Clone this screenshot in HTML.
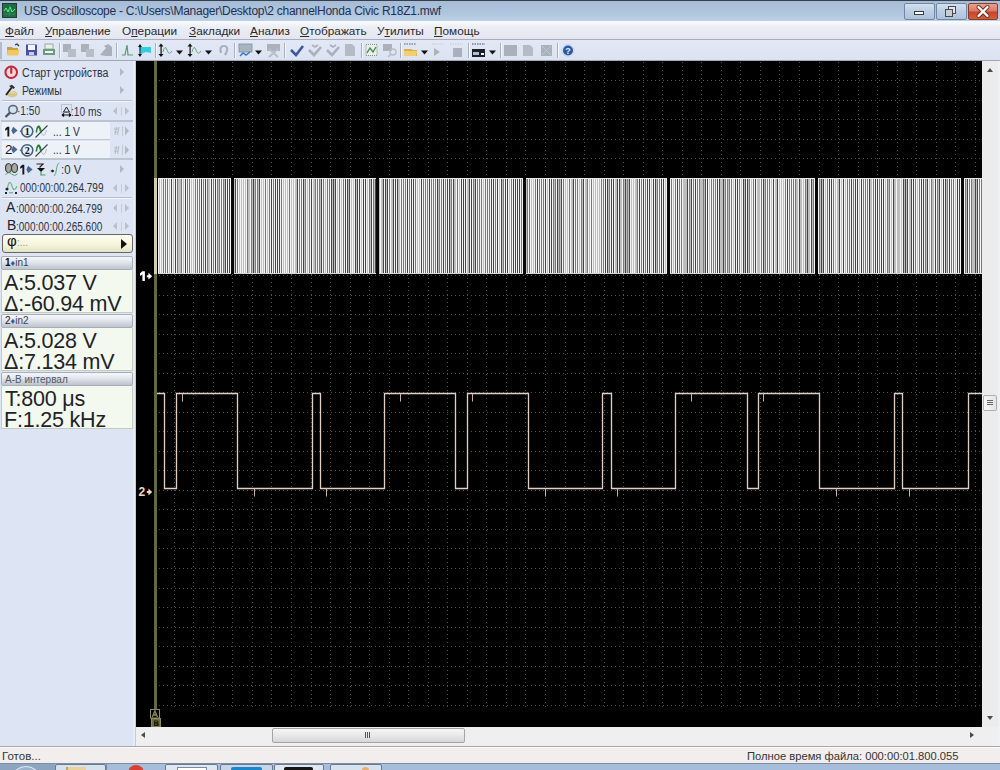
<!DOCTYPE html>
<html><head><meta charset="utf-8">
<style>
*{margin:0;padding:0;box-sizing:border-box}
html,body{width:1000px;height:770px;overflow:hidden;background:#dde5f4;font-family:"Liberation Sans",sans-serif}
.a{position:absolute}
#title{left:0;top:0;width:1000px;height:21px;background:linear-gradient(#a6bbd5,#b0c5de 60%,#bcd2e8);border-top:1px solid #34404c}
#title .t{left:24px;top:3px;font-size:12px;letter-spacing:-0.26px;color:#1e3250;white-space:nowrap}
#menu{left:0;top:21px;width:1000px;height:19px;background:linear-gradient(#fafbfe,#eceef6 35%,#e3e5f0);border-bottom:1px solid #a8adb9}
#menu span{position:absolute;top:3px;font-size:11.8px;color:#2a2a2a;white-space:nowrap}
#menu u{text-decoration:underline}
#tool{left:0;top:40px;width:1000px;height:21px;background:linear-gradient(#e2e8f5,#dbe2f1);border-bottom:1px solid #a0a8b4}
#panel{left:0;top:61px;width:136px;height:685px;background:#dde5f4;border-right:1px solid #c4ccd6;box-shadow:inset -2px 0 0 #e6ecf4}
#vs{left:982px;top:61px;width:16px;height:666px;background:#ececec}
#hs{left:136px;top:727px;width:862px;height:19px;background:#efefef}
#rb{left:998px;top:61px;width:2px;height:685px;background:#f0f1f3}
#status{left:0;top:746px;width:1000px;height:17px;background:#f1eeed;border-top:1px solid #a8a8a8;box-shadow:inset 0 1px 0 #fafafa}
#status span{position:absolute;top:3px;font-size:11.5px;color:#333;white-space:nowrap}
#task{left:0;top:763px;width:1000px;height:7px;background:#a6bedb;border-top:1px solid #7e8ea2;overflow:hidden}
.tbtn{top:0;height:12px;border:1px solid #6a7a90;border-radius:2px;overflow:hidden}
.tx{font-size:12px;line-height:13px;padding-top:1px;color:#2e3440;white-space:nowrap;transform-origin:0 0}
.tb{font-size:13.5px;line-height:14px;font-weight:normal;color:#15181f}
.tA{font-size:14px;line-height:14px;color:#1e222a}
.arr{width:0;height:0;border-left:4px solid #b0b8c4;border-top:4.5px solid transparent;border-bottom:4.5px solid transparent}
.barr{width:0;height:0;border-left:5px solid #5878a0;border-top:4.5px solid transparent;border-bottom:4.5px solid transparent}
.lr{width:17px;height:9px;background:
 linear-gradient(#c4ccd6,#c4ccd6) 8px 0/1px 9px no-repeat}
.lr:before{content:"";position:absolute;left:0;top:0;border-right:4px solid #b8c0ca;border-top:4.5px solid transparent;border-bottom:4.5px solid transparent}
.lr:after{content:"";position:absolute;left:12px;top:0;border-left:4px solid #b8c0ca;border-top:4.5px solid transparent;border-bottom:4.5px solid transparent}
.sep{left:2px;width:130px;height:2px;border-top:1px solid #b6bec9;border-bottom:1px solid #f2f6fb}
.sep2{left:1px;width:132px;height:2px;background:#bcc4ce}
.chbox{left:2px;width:108px;height:18px;background:#edf2f9;border-bottom:1px solid #c0c8d2}
.phi{left:2px;top:173px;width:131px;height:19px;border:1.5px solid #666;border-radius:3px;background:linear-gradient(#fdfdf0,#f4f4dc 60%,#e2e2c4)}
.ph{position:absolute;left:4px;top:-3px;font-size:15px;color:#111}
.pd{position:absolute;left:14px;top:2px;font-size:10px;color:#9a9a88}
.pa{left:118px;top:4px;width:0;height:0;border-left:6px solid #111;border-top:5px solid transparent;border-bottom:5px solid transparent}
.mh{left:1px;width:132px;height:14px;border:1px solid #a8aeb8;border-radius:2px;background:linear-gradient(#f6f7fa,#e4e7ee 40%,#bfc3cd);font-size:10px;line-height:12px;padding-left:3px;color:#3a4250;white-space:nowrap}
.mh b{color:#111;font-weight:bold}
.mh i{font-style:normal;color:#3a5a88;font-size:9px}
.mc{left:1px;width:132px;background:#f3f9ee;border:1px solid #c4ccc0;border-top:none;padding-left:2px;padding-top:0}
.mc{padding-top:3px}
.mc div{font-size:21.5px;letter-spacing:-0.2px;line-height:20.8px;color:#1e2228;white-space:nowrap}
</style></head><body>
<div id="title" class="a">
  <svg class="a" style="left:2px;top:2px" width="15" height="15" viewBox="0 0 15 15"><rect x="0.5" y="0.5" width="14" height="14" fill="#1a7040" stroke="#2a3a30"/><path d="M2 8L4 5L6 9L8 4L10 9L13 6" stroke="#6cf090" stroke-width="1" fill="none"/><path d="M2 11H13M7.5 2V13" stroke="#3aa060" stroke-width="0.6"/></svg>
  <div class="a t">USB Oscilloscope - C:\Users\Manager\Desktop\2 channelHonda Civic R18Z1.mwf</div>
  <div class="a" style="left:904px;top:2px;width:31px;height:17px;border:1px solid #7088a4;border-radius:2px;background:linear-gradient(#d4e0ee,#bccee4 50%,#aec2dc)"></div>
  <div class="a" style="left:914px;top:10px;width:10px;height:4px;background:#fff;border:1px solid #3a3a3a"></div>
  <div class="a" style="left:936px;top:2px;width:31px;height:17px;border:1px solid #7088a4;border-radius:2px;background:linear-gradient(#d4e0ee,#bccee4 50%,#aec2dc)"></div>
  <div class="a" style="left:948px;top:5px;width:8px;height:8px;border:1.5px solid #4a4a4a;background:#e4e8ee"></div>
  <div class="a" style="left:945px;top:8px;width:8px;height:8px;border:1.5px solid #4a4a4a;background:#c8ccd4"></div>
  <div class="a" style="left:968px;top:2px;width:30px;height:17px;border:1px solid #8a3a2a;border-radius:2px;background:linear-gradient(#eaa08e,#dc7a64 45%,#c8442c 55%,#d0603e)"></div>
  <svg class="a" style="left:975px;top:3px" width="16" height="15" viewBox="0 0 16 15"><path d="M3.5 3L12.5 12M12.5 3L3.5 12" stroke="#6a2a20" stroke-width="4" stroke-linecap="round"/><path d="M3.5 3L12.5 12M12.5 3L3.5 12" stroke="#fff" stroke-width="2.4" stroke-linecap="round"/></svg>
</div>
<div id="menu" class="a">
  <span style="left:5px"><u>Ф</u>айл</span>
  <span style="left:45px"><u>У</u>правление</span>
  <span style="left:122px">О<u>п</u>ерации</span>
  <span style="left:189px"><u>З</u>акладки</span>
  <span style="left:250px"><u>А</u>нализ</span>
  <span style="left:300px"><u>О</u>тображать</span>
  <span style="left:377px">У<u>т</u>илиты</span>
  <span style="left:434px"><u>П</u>омощь</span>
</div>
<div id="tool" class="a"></div>
<svg class="a" style="left:0;top:40px" width="600" height="21" viewBox="0 40 600 21">
<rect x="0" y="42" width="2" height="17" fill="#b4bcc8"/>
<path d="M7 47H12L13 48H18V55H7Z" fill="#c8a040"/><path d="M7.5 50H19.5L18 55.5H7Z" fill="#f0c860"/><path d="M15 45L17 44L19 46" stroke="#333" stroke-width="1.2" fill="none"/>
<rect x="26" y="44.5" width="11" height="11" fill="#4a4e9c"/><rect x="28" y="45" width="7" height="5" fill="#f4f4ff"/><rect x="29" y="52" width="5" height="3" fill="#c8cce8"/>
<rect x="45" y="44" width="8" height="5" fill="#e8f0e8" stroke="#8a9a90" stroke-width=".8"/><rect x="43" y="49" width="12" height="6" fill="#6a9a80"/><rect x="45" y="51" width="8" height="2" fill="#f4f4f4"/>
<rect x="59" y="43" width="1" height="15" fill="#a8b0bc"/><rect x="60" y="43" width="1" height="15" fill="#f4f7fb"/>
<rect x="63" y="44" width="8" height="8" fill="#a9b1bb"/><rect x="68" y="49" width="8" height="8" fill="#b8bec6"/>
<rect x="81" y="44" width="8" height="8" fill="#a9b1bb"/><rect x="86" y="49" width="8" height="8" fill="#b8bec6"/>
<path d="M100 55L106 48L104 46L108 44L112 47V56H106Z" fill="#a9b1bb"/>
<rect x="116" y="43" width="1" height="15" fill="#a8b0bc"/><rect x="117" y="43" width="1" height="15" fill="#f4f7fb"/>
<path d="M122 55H125L127 45L128 55H133" stroke="#5a9a70" stroke-width="1.2" fill="none"/>
<path d="M139 47H151V53L146 52L141 54Z" fill="#30d0e0"/><path d="M140 44L142 47H138Z M140 57L142 54H138Z" fill="#111"/><rect x="139.5" y="46" width="1" height="9" fill="#111"/>
<rect x="155" y="43" width="1" height="15" fill="#a8b0bc"/><rect x="156" y="43" width="1" height="15" fill="#f4f7fb"/>
<path d="M161 43.5L163.5 46.5H158.5Z M161 57L163.5 54H158.5Z" fill="#111"/><rect x="160.5" y="46" width="1.2" height="8.5" fill="#111"/><path d="M163 52Q165 44 167 50T172 51" stroke="#70a880" stroke-width="1" fill="none"/>
<path d="M176 50.5H183L179.5 54.5Z" fill="#111"/>
<path d="M190 43.5L192.5 46.5H187.5Z M190 57L192.5 54H187.5Z" fill="#111"/><rect x="189.5" y="46" width="1.2" height="8.5" fill="#111"/><path d="M192 52Q194 44 196 50T201 51" stroke="#70a880" stroke-width="1" fill="none"/>
<path d="M205 50.5H212L208.5 54.5Z" fill="#111"/>
<path d="M221 53Q219 46 224 46Q228 46 227 51L225 55" stroke="#a9b1bb" stroke-width="2.2" fill="none"/>
<rect x="234" y="43" width="1" height="15" fill="#a8b0bc"/><rect x="235" y="43" width="1" height="15" fill="#f4f7fb"/>
<rect x="239" y="44" width="13" height="8" fill="#a8b4c0" stroke="#8090a0" stroke-width=".8"/><path d="M240 56L243 53L246 55L250 52" stroke="#3a78c8" stroke-width="1.5" fill="none"/>
<path d="M255 50.5H262L258.5 54.5Z" fill="#111"/>
<rect x="267" y="44" width="13" height="7" fill="#a9b1bb"/><path d="M269 57L278 49M269 49L278 57" stroke="#b8bec6" stroke-width="2"/>
<rect x="284" y="43" width="1" height="15" fill="#a8b0bc"/><rect x="285" y="43" width="1" height="15" fill="#f4f7fb"/>
<path d="M291 50L296 55L303 46" stroke="#3a5a9a" stroke-width="2.6" fill="none"/>
<path d="M309 50L314 55L321 47" stroke="#a9b1bb" stroke-width="2.6" fill="none"/><path d="M312 45L315 47L318 45" stroke="#a9b1bb" stroke-width="1.6" fill="none"/>
<path d="M327 50L332 55L339 47" stroke="#a9b1bb" stroke-width="2.6" fill="none"/><path d="M330 45L333 47L336 45" stroke="#a9b1bb" stroke-width="1.6" fill="none"/>
<path d="M345 44H352L355 47V56H345Z" fill="#b4bbc4"/>
<rect x="361" y="43" width="1" height="15" fill="#a8b0bc"/><rect x="362" y="43" width="1" height="15" fill="#f4f7fb"/>
<rect x="366" y="44.5" width="11" height="11" fill="#e8f0e8" stroke="#6a7a70" stroke-width=".8" stroke-dasharray="1 1"/><path d="M367 53L370 48L373 52L376 47" stroke="#4a8a5a" stroke-width="1.4" fill="none"/>
<rect x="383" y="44" width="9" height="7" fill="#a9b1bb"/><circle cx="393" cy="52" r="3" fill="none" stroke="#b8bec6" stroke-width="1.4"/><path d="M391 54L388 57" stroke="#b8bec6" stroke-width="1.6"/>
<rect x="400" y="43" width="1" height="15" fill="#a8b0bc"/><rect x="401" y="43" width="1" height="15" fill="#f4f7fb"/>
<path d="M404 44H416" stroke="#4a5a7a" stroke-width="1.2" stroke-dasharray="1.5 1"/><path d="M404 49H411L413 50H417V56H404Z" fill="#d8b050"/><path d="M404 51H417L416 56H404Z" fill="#f0d070"/>
<path d="M421 50.5H428L424.5 54.5Z" fill="#111"/>
<path d="M432 44H444" stroke="#c4cad2" stroke-width="1" stroke-dasharray="1.5 1"/><path d="M434 48L440 52L434 56Z" fill="#a9b1bb"/>
<path d="M450 44H463" stroke="#c4cad2" stroke-width="1" stroke-dasharray="1.5 1"/><rect x="453" y="48" width="9" height="9" fill="#a9b1bb"/>
<rect x="468" y="43" width="1" height="15" fill="#a8b0bc"/><rect x="469" y="43" width="1" height="15" fill="#f4f7fb"/>
<path d="M472 44H485" stroke="#3a4a6a" stroke-width="1.2" stroke-dasharray="1.5 1"/><rect x="472" y="49" width="13" height="8" fill="#1a2028"/><rect x="473" y="52" width="6" height="3" fill="#b0c0d0"/><rect x="481" y="53" width="3" height="2" fill="#fff"/>
<path d="M489 50.5H496L492.5 54.5Z" fill="#111"/>
<rect x="500" y="43" width="1" height="15" fill="#a8b0bc"/><rect x="501" y="43" width="1" height="15" fill="#f4f7fb"/>
<rect x="504" y="45" width="13" height="11" fill="#a9b1bb"/>
<path d="M523 45H530L533 48V56H523Z" fill="#b4bbc4"/>
<rect x="541" y="45" width="11" height="11" fill="#a9b1bb"/><path d="M542 46L551 55M551 46L542 55" stroke="#c0c6ce" stroke-width="1"/>
<rect x="557" y="43" width="1" height="15" fill="#a8b0bc"/><rect x="558" y="43" width="1" height="15" fill="#f4f7fb"/>
<circle cx="568" cy="50.5" r="6" fill="#dfe8f4" stroke="#c8d4e4" stroke-width="1"/><circle cx="568" cy="50.5" r="5" fill="#2a58a8"/><text x="568" y="54" font-size="9" font-weight="bold" fill="#e8f0ff" text-anchor="middle" font-family="Liberation Sans">?</text>
</svg><div id="panel" class="a">
<!-- row: start -->
<svg class="a" style="left:4px;top:4px" width="15" height="15" viewBox="0 0 15 15"><circle cx="7.2" cy="7.3" r="5.8" fill="#f3d6da" stroke="#c02838" stroke-width="2"/><rect x="6.2" y="2.2" width="2.1" height="6.5" fill="#c02838"/></svg>
<div class="a tx" style="left:22px;top:5px;transform:scaleX(0.884)">Старт устройства</div>
<div class="a arr" style="left:120px;top:7px"></div>
<svg class="a" style="left:4px;top:23px" width="15" height="14" viewBox="0 0 15 14"><ellipse cx="8" cy="10" rx="5.5" ry="3.2" fill="#d8c48c"/><path d="M4 9.5Q8 4 12 9.5" fill="#e6d6a4"/><path d="M2 11L8 3" stroke="#222" stroke-width="1.8"/><path d="M5 2L8 0.8L11 3.5L9.5 5Z" fill="#333"/></svg>
<div class="a tx" style="left:22px;top:23px;transform:scaleX(0.87)">Режимы</div>
<div class="a arr" style="left:120px;top:25px"></div>
<div class="a sep" style="top:39px"></div>
<!-- zoom row -->
<svg class="a" style="left:4px;top:43px" width="15" height="15" viewBox="0 0 15 15"><circle cx="9" cy="5.6" r="4.2" fill="#cfe0ee" stroke="#5a6470" stroke-width="1.5"/><path d="M6 8.6L1.5 13" stroke="#4a5260" stroke-width="2.2"/></svg>
<div class="a tx" style="left:17px;top:43px;transform:scaleX(0.843)">·1:50</div>
<svg class="a" style="left:61px;top:43px" width="11" height="13" viewBox="0 0 11 13"><rect x="0.5" y="0.5" width="10" height="8" fill="none" stroke="#9aa2ae" stroke-dasharray="1 1"/><path d="M2.5 8L5.5 3L8.5 8Z" fill="none" stroke="#222" stroke-width="1"/><path d="M1 11H10M1 11L3 9.5M1 11L3 12.5M10 11L8 9.5M10 11L8 12.5" stroke="#111" stroke-width="1.2"/></svg>
<div class="a tx" style="left:71px;top:44px;transform:scaleX(0.85)">:10 ms</div>
<div class="a lr" style="left:113px;top:46px"></div>
<div class="a sep2" style="top:59px"></div>
<!-- channel rows -->
<div class="a chbox" style="top:61px"></div>
<div class="a chbox" style="top:80px"></div>
<div class="a chr" style="top:61px;height:36px"></div>
<svg class="a" style="left:4px;top:65px" width="7" height="11" viewBox="0 0 7 11"><path d="M3.3 0.8H5.3V10.6H3.4V3.6L1.2 4.8V2.8Z" fill="#15181f"/></svg>
<svg class="a" style="left:11px;top:126px;top:65px" width="7" height="9" viewBox="0 0 7 9"><path d="M0.3 4.5L2.2 0.8L6.6 4.5L2.2 8.2Z" fill="#4a6890"/></svg>
<svg class="a" style="left:19px;top:63px" width="15" height="15" viewBox="0 0 15 15"><circle cx="8.2" cy="7.3" r="5.6" fill="#e6eef8" stroke="#44607c" stroke-width="1.5"/><path d="M0.5 7.3L3.2 5.2V9.4Z" fill="#4a6a98"/><text x="8.2" y="11" font-size="10" font-weight="bold" text-anchor="middle" fill="#111" font-family="Liberation Serif">1</text></svg>
<svg class="a" style="left:35px;top:63px" width="13" height="14" viewBox="0 0 13 14"><path d="M0.5 8.5Q1.5 1 3.5 1.5Q5.5 1 6.8 7L5 8Q4 4 3.5 4Q2.5 4 2.2 8.5Z" fill="#2a8038"/><path d="M6 8Q9 16 11.5 6" stroke="#b0b8c0" stroke-width="1" fill="none"/><path d="M0.5 13.5L12.5 1.5" stroke="#3a4048" stroke-width="1.1"/></svg>
<div class="a tx" style="left:53px;top:64px;transform:scaleX(0.862)">... 1 V</div>
<svg class="a" style="left:113px;top:65px" width="17" height="10" viewBox="0 0 17 10"><path d="M1 3H5M1 6H5M3.5 1L2 9M6 1L4.5 9" stroke="#b4bcc6" stroke-width="1"/><rect x="9" y="0" width="1" height="10" fill="#c0c8d0"/><path d="M12 0.5L16 5L12 9.5Z" fill="#b0b8c2"/></svg>
<div class="a tb" style="left:5px;top:82px">2</div>
<svg class="a" style="left:11px;top:84px" width="7" height="9" viewBox="0 0 7 9"><path d="M0.3 4.5L2.2 0.8L6.6 4.5L2.2 8.2Z" fill="#4a6890"/></svg>
<svg class="a" style="left:19px;top:82px" width="15" height="15" viewBox="0 0 15 15"><circle cx="8.2" cy="7.3" r="5.6" fill="#e6eef8" stroke="#44607c" stroke-width="1.5"/><path d="M0.5 7.3L3.2 5.2V9.4Z" fill="#4a6a98"/><text x="8.2" y="11" font-size="10" font-weight="bold" text-anchor="middle" fill="#111" font-family="Liberation Serif">2</text></svg>
<svg class="a" style="left:35px;top:82px" width="13" height="14" viewBox="0 0 13 14"><path d="M0.5 8.5Q1.5 1 3.5 1.5Q5.5 1 6.8 7L5 8Q4 4 3.5 4Q2.5 4 2.2 8.5Z" fill="#2a8038"/><path d="M6 8Q9 16 11.5 6" stroke="#b0b8c0" stroke-width="1" fill="none"/><path d="M0.5 13.5L12.5 1.5" stroke="#3a4048" stroke-width="1.1"/></svg>
<div class="a tx" style="left:53px;top:81.5px;transform:scaleX(0.862)">... 1 V</div>
<svg class="a" style="left:113px;top:84px" width="17" height="10" viewBox="0 0 17 10"><path d="M1 3H5M1 6H5M3.5 1L2 9M6 1L4.5 9" stroke="#b4bcc6" stroke-width="1"/><rect x="9" y="0" width="1" height="10" fill="#c0c8d0"/><path d="M12 0.5L16 5L12 9.5Z" fill="#b0b8c2"/></svg>
<div class="a sep2" style="top:97px"></div>
<!-- trigger row -->
<svg class="a" style="left:5px;top:101px" width="13" height="15" viewBox="0 0 13 15"><ellipse cx="3.5" cy="6" rx="3" ry="4.5" fill="#a8a8a0" stroke="#404040" stroke-width="1.2"/><ellipse cx="9.5" cy="6" rx="3" ry="4.5" fill="#a8a8a0" stroke="#404040" stroke-width="1.2"/><path d="M0.5 13Q3 9 6.5 12Q10 15 12.5 12" stroke="#5aa070" stroke-width="1" fill="none"/></svg>
<svg class="a" style="left:19px;top:103px" width="7" height="11" viewBox="0 0 7 11"><path d="M3.3 0.8H5.3V10.6H3.4V3.6L1.2 4.8V2.8Z" fill="#15181f"/></svg>
<svg class="a" style="left:26px;top:104px" width="7" height="9" viewBox="0 0 7 9"><path d="M0.3 4.5L2.2 0.8L6.6 4.5L2.2 8.2Z" fill="#4a6890"/></svg>
<svg class="a" style="left:36px;top:102px" width="10" height="13" viewBox="0 0 10 13"><path d="M0.5 1H7L3.5 4.5" stroke="#222" stroke-width="1.2" fill="none"/><path d="M1 5H9L5 9Z" fill="#111"/><path d="M5 8V12H9.5" stroke="#4a9a5a" stroke-width="1.2" fill="none"/></svg>
<svg class="a" style="left:50px;top:101px" width="10" height="15" viewBox="0 0 10 15"><path d="M0.5 9L2.5 7.5L4.5 9L2.5 10.5Z" fill="#222"/><path d="M4 14Q6 13 6.5 7Q7 1 9.5 1" stroke="#60a878" stroke-width="1" fill="none"/></svg>
<div class="a tx" style="left:61px;top:102px;transform:scaleX(0.95)">:0 V</div>
<div class="a arr" style="left:120px;top:104px"></div>
<svg class="a" style="left:4px;top:119px" width="14" height="14" viewBox="0 0 14 14"><path d="M3 11Q5 -3 8 6Q10 13 13 6" stroke="#6ab888" stroke-width="1.1" fill="none"/><path d="M1 9L3 7.5L5 9L3 10.5Z" fill="#222"/><rect x="1" y="12" width="2" height="2" fill="#222"/><rect x="5" y="12" width="4" height="1.5" fill="#9aa"/><rect x="11" y="12" width="2" height="2" fill="#222"/></svg>
<div class="a tx" style="left:20px;top:120px;transform:scaleX(0.834)">000:00:00.264.799</div>
<div class="a lr" style="left:113px;top:123px"></div>
<div class="a sep" style="top:136px"></div>
<!-- A/B rows -->
<div class="a tA" style="left:6px;top:139px">A</div>
<div class="a tx" style="left:16px;top:141px;transform:scaleX(0.834)">:000:00:00.264.799</div>
<div class="a lr" style="left:113px;top:143px"></div>
<div class="a tA" style="left:7px;top:157px">B</div>
<div class="a tx" style="left:16px;top:159px;transform:scaleX(0.834)">:000:00:00.265.600</div>
<div class="a lr" style="left:113px;top:161px"></div>
<div class="a phi"><span class="ph">φ</span><span class="pd">:...</span><div class="a pa"></div></div>
<!-- measurements -->
<div class="a mh" style="top:195px"><b>1</b><i>♦</i>in1</div>
<div class="a mc" style="top:209px;height:43px"><div>A:5.037 V</div><div>Δ:-60.94 mV</div></div>
<div class="a mh" style="top:253px"><b style="font-weight:normal;color:#20242c">2</b><i>♦</i>in2</div>
<div class="a mc" style="top:267px;height:43px"><div>A:5.028 V</div><div>Δ:7.134 mV</div></div>
<div class="a mh" style="top:311px;color:#505866;padding-top:1px">А-В интервал</div>
<div class="a mc" style="top:325px;height:43px;padding-left:3px"><div>T:800 μs</div><div style="margin-left:-1px">F:1.25 kHz</div></div>
</div>
<svg class="a" style="left:136px;top:61px" width="846" height="666" viewBox="136 61 846 666" shape-rendering="crispEdges">
<rect x="136" y="61" width="846" height="666" fill="#000"/>
<path d="M174.5 62V707M193.5 62V707M213.5 62V707M232.5 62V707M252.5 62V707M271.5 62V707M291.5 62V707M311.5 62V707M330.5 62V707M350.5 62V707M369.5 62V707M389.5 62V707M408.5 62V707M428.5 62V707M447.5 62V707M467.5 62V707M486.5 62V707M506.5 62V707M525.5 62V707M545.5 62V707M565.5 62V707M584.5 62V707M604.5 62V707M623.5 62V707M643.5 62V707M662.5 62V707M682.5 62V707M701.5 62V707M721.5 62V707M740.5 62V707M760.5 62V707M779.5 62V707M799.5 62V707M819.5 62V707M838.5 62V707M858.5 62V707M877.5 62V707M897.5 62V707M916.5 62V707M936.5 62V707M955.5 62V707M975.5 62V707" stroke="#505050" stroke-width="1" stroke-dasharray="1 3" fill="none"/>
<path d="M155 80.5H982M155 100.5H982M155 119.5H982M155 139.5H982M155 158.5H982M155 178.5H982M155 197.5H982M155 217.5H982M155 236.5H982M155 256.5H982M155 275.5H982M155 295.5H982M155 314.5H982M155 334.5H982M155 353.5H982M155 373.5H982M155 392.5H982M155 412.5H982M155 431.5H982M155 451.5H982M155 470.5H982M155 490.5H982M155 509.5H982M155 529.5H982M155 548.5H982M155 568.5H982M155 588.5H982M155 607.5H982M155 627.5H982M155 646.5H982M155 666.5H982M155 685.5H982M155 705.5H982" stroke="#505050" stroke-width="1" stroke-dasharray="1 3" fill="none"/>
<path d="M158 178h1v96h-1zM160 178h1v96h-1zM162 178h1v96h-1zM164 178h1v96h-1zM166 178h1v96h-1zM168 178h1v96h-1zM170 178h1v96h-1zM172 178h1v96h-1zM174 178h1v96h-1zM176 178h1v96h-1zM182 178h1v96h-1zM184 178h1v96h-1zM186 178h1v96h-1zM188 178h1v96h-1zM190 178h1v96h-1zM192 178h1v96h-1zM194 178h1v96h-1zM196 178h1v96h-1zM198 178h1v96h-1zM200 178h1v96h-1zM202 178h1v96h-1zM204 178h1v96h-1zM206 178h1v96h-1zM210 178h1v96h-1zM212 178h1v96h-1zM214 178h1v96h-1zM216 178h1v96h-1zM220 178h1v96h-1zM222 178h1v96h-1zM226 178h1v96h-1zM228 178h1v96h-1zM230 178h1v96h-1zM236 178h1v96h-1zM238 178h1v96h-1zM240 178h1v96h-1zM242 178h1v96h-1zM244 178h1v96h-1zM246 178h1v96h-1zM250 178h1v96h-1zM256 178h1v96h-1zM260 178h1v96h-1zM262 178h1v96h-1zM264 178h1v96h-1zM266 178h1v96h-1zM268 178h1v96h-1zM270 178h1v96h-1zM272 178h1v96h-1zM274 178h1v96h-1zM276 178h1v96h-1zM278 178h1v96h-1zM280 178h1v96h-1zM282 178h1v96h-1zM284 178h1v96h-1zM286 178h1v96h-1zM288 178h1v96h-1zM290 178h1v96h-1zM292 178h1v96h-1zM294 178h1v96h-1zM298 178h1v96h-1zM300 178h1v96h-1zM302 178h1v96h-1zM306 178h1v96h-1zM308 178h1v96h-1zM310 178h1v96h-1zM312 178h1v96h-1zM316 178h1v96h-1zM318 178h1v96h-1zM322 178h1v96h-1zM324 178h1v96h-1zM326 178h1v96h-1zM328 178h1v96h-1zM330 178h1v96h-1zM336 178h1v96h-1zM338 178h1v96h-1zM340 178h1v96h-1zM342 178h1v96h-1zM344 178h1v96h-1zM346 178h1v96h-1zM350 178h1v96h-1zM352 178h1v96h-1zM354 178h1v96h-1zM358 178h1v96h-1zM360 178h1v96h-1zM362 178h1v96h-1zM364 178h1v96h-1zM366 178h1v96h-1zM368 178h1v96h-1zM372 178h1v96h-1zM380 178h1v96h-1zM384 178h1v96h-1zM388 178h1v96h-1zM390 178h1v96h-1zM394 178h1v96h-1zM396 178h1v96h-1zM400 178h1v96h-1zM402 178h1v96h-1zM404 178h1v96h-1zM406 178h1v96h-1zM408 178h1v96h-1zM410 178h1v96h-1zM412 178h1v96h-1zM414 178h1v96h-1zM416 178h1v96h-1zM418 178h1v96h-1zM420 178h1v96h-1zM422 178h1v96h-1zM424 178h1v96h-1zM426 178h1v96h-1zM428 178h1v96h-1zM430 178h1v96h-1zM432 178h1v96h-1zM434 178h1v96h-1zM436 178h1v96h-1zM440 178h1v96h-1zM442 178h1v96h-1zM444 178h1v96h-1zM446 178h1v96h-1zM448 178h1v96h-1zM452 178h1v96h-1zM456 178h1v96h-1zM458 178h1v96h-1zM460 178h1v96h-1zM462 178h1v96h-1zM464 178h1v96h-1zM466 178h1v96h-1zM470 178h1v96h-1zM472 178h1v96h-1zM476 178h1v96h-1zM478 178h1v96h-1zM480 178h1v96h-1zM482 178h1v96h-1zM484 178h1v96h-1zM486 178h1v96h-1zM488 178h1v96h-1zM490 178h1v96h-1zM492 178h1v96h-1zM494 178h1v96h-1zM496 178h1v96h-1zM498 178h1v96h-1zM500 178h1v96h-1zM504 178h1v96h-1zM506 178h1v96h-1zM508 178h1v96h-1zM510 178h1v96h-1zM512 178h1v96h-1zM514 178h1v96h-1zM516 178h1v96h-1zM518 178h1v96h-1zM520 178h1v96h-1zM522 178h1v96h-1zM528 178h1v96h-1zM530 178h1v96h-1zM532 178h1v96h-1zM534 178h1v96h-1zM536 178h1v96h-1zM538 178h1v96h-1zM540 178h1v96h-1zM542 178h1v96h-1zM544 178h1v96h-1zM546 178h1v96h-1zM548 178h1v96h-1zM550 178h1v96h-1zM552 178h1v96h-1zM556 178h1v96h-1zM562 178h1v96h-1zM564 178h1v96h-1zM566 178h1v96h-1zM568 178h1v96h-1zM570 178h1v96h-1zM574 178h1v96h-1zM576 178h1v96h-1zM578 178h1v96h-1zM580 178h1v96h-1zM584 178h1v96h-1zM588 178h1v96h-1zM590 178h1v96h-1zM592 178h1v96h-1zM594 178h1v96h-1zM596 178h1v96h-1zM598 178h1v96h-1zM600 178h1v96h-1zM602 178h1v96h-1zM604 178h1v96h-1zM606 178h1v96h-1zM610 178h1v96h-1zM612 178h1v96h-1zM614 178h1v96h-1zM618 178h1v96h-1zM622 178h1v96h-1zM630 178h1v96h-1zM632 178h1v96h-1zM634 178h1v96h-1zM638 178h1v96h-1zM640 178h1v96h-1zM642 178h1v96h-1zM644 178h1v96h-1zM646 178h1v96h-1zM648 178h1v96h-1zM650 178h1v96h-1zM652 178h1v96h-1zM654 178h1v96h-1zM658 178h1v96h-1zM660 178h1v96h-1zM662 178h1v96h-1zM664 178h1v96h-1zM666 178h1v96h-1zM670 178h1v96h-1zM672 178h1v96h-1zM674 178h1v96h-1zM676 178h1v96h-1zM678 178h1v96h-1zM680 178h1v96h-1zM682 178h1v96h-1zM688 178h1v96h-1zM692 178h1v96h-1zM694 178h1v96h-1zM696 178h1v96h-1zM698 178h1v96h-1zM706 178h1v96h-1zM708 178h1v96h-1zM710 178h1v96h-1zM712 178h1v96h-1zM714 178h1v96h-1zM716 178h1v96h-1zM718 178h1v96h-1zM726 178h1v96h-1zM730 178h1v96h-1zM732 178h1v96h-1zM734 178h1v96h-1zM736 178h1v96h-1zM738 178h1v96h-1zM740 178h1v96h-1zM742 178h1v96h-1zM746 178h1v96h-1zM750 178h1v96h-1zM752 178h1v96h-1zM754 178h1v96h-1zM756 178h1v96h-1zM760 178h1v96h-1zM762 178h1v96h-1zM766 178h1v96h-1zM768 178h1v96h-1zM770 178h1v96h-1zM772 178h1v96h-1zM774 178h1v96h-1zM778 178h1v96h-1zM780 178h1v96h-1zM782 178h1v96h-1zM784 178h1v96h-1zM786 178h1v96h-1zM788 178h1v96h-1zM790 178h1v96h-1zM792 178h1v96h-1zM794 178h1v96h-1zM798 178h1v96h-1zM802 178h1v96h-1zM804 178h1v96h-1zM810 178h1v96h-1zM814 178h1v96h-1zM818 178h1v96h-1zM824 178h1v96h-1zM826 178h1v96h-1zM828 178h1v96h-1zM830 178h1v96h-1zM832 178h1v96h-1zM834 178h1v96h-1zM836 178h1v96h-1zM840 178h1v96h-1zM842 178h1v96h-1zM844 178h1v96h-1zM846 178h1v96h-1zM848 178h1v96h-1zM850 178h1v96h-1zM852 178h1v96h-1zM854 178h1v96h-1zM856 178h1v96h-1zM858 178h1v96h-1zM860 178h1v96h-1zM862 178h1v96h-1zM864 178h1v96h-1zM866 178h1v96h-1zM868 178h1v96h-1zM872 178h1v96h-1zM874 178h1v96h-1zM876 178h1v96h-1zM878 178h1v96h-1zM880 178h1v96h-1zM882 178h1v96h-1zM884 178h1v96h-1zM886 178h1v96h-1zM890 178h1v96h-1zM892 178h1v96h-1zM896 178h1v96h-1zM900 178h1v96h-1zM902 178h1v96h-1zM908 178h1v96h-1zM912 178h1v96h-1zM914 178h1v96h-1zM916 178h1v96h-1zM918 178h1v96h-1zM920 178h1v96h-1zM922 178h1v96h-1zM924 178h1v96h-1zM928 178h1v96h-1zM930 178h1v96h-1zM934 178h1v96h-1zM936 178h1v96h-1zM940 178h1v96h-1zM942 178h1v96h-1zM944 178h1v96h-1zM948 178h1v96h-1zM950 178h1v96h-1zM952 178h1v96h-1zM954 178h1v96h-1zM956 178h1v96h-1zM958 178h1v96h-1zM960 178h1v96h-1zM964 178h1v96h-1zM968 178h1v96h-1zM970 178h1v96h-1zM978 178h1v96h-1zM980 178h1v96h-1z" fill="#f5f5f5"/>
<path d="M159 178h1v96h-1zM161 178h1v96h-1zM169 178h1v96h-1zM173 178h1v96h-1zM178 178h3v96h-3zM183 178h1v96h-1zM191 178h1v96h-1zM193 178h1v96h-1zM208 178h2v96h-2zM218 178h1v96h-1zM224 178h1v96h-1zM234 178h1v96h-1zM239 178h1v96h-1zM241 178h1v96h-1zM243 178h1v96h-1zM245 178h1v96h-1zM248 178h2v96h-2zM252 178h1v96h-1zM254 178h1v96h-1zM258 178h1v96h-1zM261 178h1v96h-1zM263 178h1v96h-1zM267 178h1v96h-1zM283 178h1v96h-1zM285 178h1v96h-1zM287 178h1v96h-1zM291 178h1v96h-1zM293 178h1v96h-1zM295 178h2v96h-2zM304 178h1v96h-1zM307 178h1v96h-1zM313 178h2v96h-2zM320 178h1v96h-1zM325 178h1v96h-1zM332 178h1v96h-1zM334 178h1v96h-1zM337 178h1v96h-1zM341 178h1v96h-1zM348 178h1v96h-1zM351 178h1v96h-1zM353 178h1v96h-1zM356 178h1v96h-1zM361 178h1v96h-1zM367 178h1v96h-1zM370 178h1v96h-1zM374 178h1v96h-1zM379 178h1v96h-1zM381 178h2v96h-2zM386 178h1v96h-1zM391 178h2v96h-2zM398 178h2v96h-2zM417 178h1v96h-1zM419 178h1v96h-1zM438 178h1v96h-1zM450 178h1v96h-1zM454 178h2v96h-2zM459 178h1v96h-1zM467 178h2v96h-2zM474 178h1v96h-1zM483 178h1v96h-1zM499 178h1v96h-1zM502 178h1v96h-1zM509 178h1v96h-1zM526 178h1v96h-1zM531 178h1v96h-1zM533 178h1v96h-1zM547 178h1v96h-1zM554 178h1v96h-1zM558 178h1v96h-1zM560 178h1v96h-1zM565 178h1v96h-1zM567 178h1v96h-1zM571 178h2v96h-2zM579 178h1v96h-1zM582 178h1v96h-1zM585 178h2v96h-2zM589 178h1v96h-1zM593 178h1v96h-1zM595 178h1v96h-1zM597 178h1v96h-1zM599 178h1v96h-1zM608 178h1v96h-1zM615 178h2v96h-2zM620 178h2v96h-2zM624 178h1v96h-1zM626 178h1v96h-1zM628 178h1v96h-1zM631 178h1v96h-1zM633 178h1v96h-1zM635 178h2v96h-2zM651 178h1v96h-1zM656 178h1v96h-1zM665 178h1v96h-1zM673 178h1v96h-1zM683 178h4v96h-4zM690 178h1v96h-1zM700 178h3v96h-3zM704 178h1v96h-1zM709 178h1v96h-1zM720 178h3v96h-3zM724 178h1v96h-1zM728 178h1v96h-1zM733 178h1v96h-1zM741 178h1v96h-1zM744 178h1v96h-1zM748 178h1v96h-1zM751 178h1v96h-1zM757 178h3v96h-3zM764 178h1v96h-1zM771 178h1v96h-1zM775 178h2v96h-2zM779 178h1v96h-1zM781 178h1v96h-1zM783 178h1v96h-1zM796 178h2v96h-2zM800 178h2v96h-2zM803 178h1v96h-1zM806 178h1v96h-1zM808 178h2v96h-2zM812 178h1v96h-1zM820 178h1v96h-1zM822 178h1v96h-1zM825 178h1v96h-1zM835 178h1v96h-1zM837 178h2v96h-2zM841 178h1v96h-1zM845 178h1v96h-1zM859 178h1v96h-1zM870 178h2v96h-2zM885 178h1v96h-1zM888 178h1v96h-1zM891 178h1v96h-1zM894 178h2v96h-2zM897 178h3v96h-3zM901 178h1v96h-1zM904 178h1v96h-1zM906 178h1v96h-1zM909 178h2v96h-2zM917 178h1v96h-1zM926 178h1v96h-1zM929 178h1v96h-1zM932 178h2v96h-2zM938 178h1v96h-1zM941 178h1v96h-1zM946 178h1v96h-1zM955 178h1v96h-1zM966 178h1v96h-1zM972 178h3v96h-3zM976 178h1v96h-1z" fill="#bebebe"/>
<path d="M163 178h1v96h-1zM165 178h1v96h-1zM167 178h1v96h-1zM177 178h1v96h-1zM181 178h1v96h-1zM187 178h1v96h-1zM189 178h1v96h-1zM195 178h1v96h-1zM197 178h1v96h-1zM199 178h1v96h-1zM203 178h1v96h-1zM207 178h1v96h-1zM213 178h1v96h-1zM217 178h1v96h-1zM219 178h1v96h-1zM221 178h1v96h-1zM223 178h1v96h-1zM237 178h1v96h-1zM247 178h1v96h-1zM251 178h1v96h-1zM255 178h1v96h-1zM257 178h1v96h-1zM265 178h1v96h-1zM269 178h1v96h-1zM273 178h1v96h-1zM281 178h1v96h-1zM289 178h1v96h-1zM299 178h1v96h-1zM301 178h1v96h-1zM305 178h1v96h-1zM309 178h1v96h-1zM315 178h1v96h-1zM317 178h1v96h-1zM319 178h1v96h-1zM323 178h1v96h-1zM327 178h1v96h-1zM329 178h1v96h-1zM339 178h1v96h-1zM343 178h1v96h-1zM369 178h1v96h-1zM373 178h1v96h-1zM389 178h1v96h-1zM401 178h1v96h-1zM403 178h1v96h-1zM405 178h1v96h-1zM409 178h1v96h-1zM415 178h1v96h-1zM423 178h1v96h-1zM425 178h1v96h-1zM427 178h1v96h-1zM431 178h1v96h-1zM433 178h1v96h-1zM435 178h1v96h-1zM439 178h1v96h-1zM441 178h1v96h-1zM445 178h1v96h-1zM451 178h1v96h-1zM457 178h1v96h-1zM473 178h1v96h-1zM477 178h1v96h-1zM479 178h1v96h-1zM481 178h1v96h-1zM485 178h1v96h-1zM487 178h1v96h-1zM489 178h1v96h-1zM495 178h1v96h-1zM503 178h1v96h-1zM511 178h1v96h-1zM521 178h1v96h-1zM527 178h1v96h-1zM529 178h1v96h-1zM535 178h1v96h-1zM539 178h1v96h-1zM541 178h1v96h-1zM543 178h1v96h-1zM553 178h1v96h-1zM555 178h1v96h-1zM559 178h1v96h-1zM563 178h1v96h-1zM569 178h1v96h-1zM575 178h1v96h-1zM577 178h1v96h-1zM581 178h1v96h-1zM587 178h1v96h-1zM591 178h1v96h-1zM601 178h1v96h-1zM603 178h1v96h-1zM609 178h1v96h-1zM623 178h1v96h-1zM627 178h1v96h-1zM637 178h1v96h-1zM641 178h1v96h-1zM645 178h1v96h-1zM657 178h1v96h-1zM659 178h1v96h-1zM671 178h1v96h-1zM675 178h1v96h-1zM679 178h1v96h-1zM681 178h1v96h-1zM689 178h1v96h-1zM693 178h1v96h-1zM697 178h1v96h-1zM699 178h1v96h-1zM703 178h1v96h-1zM711 178h1v96h-1zM713 178h1v96h-1zM715 178h1v96h-1zM725 178h1v96h-1zM727 178h1v96h-1zM729 178h1v96h-1zM731 178h1v96h-1zM739 178h1v96h-1zM749 178h1v96h-1zM753 178h1v96h-1zM761 178h1v96h-1zM765 178h1v96h-1zM767 178h1v96h-1zM769 178h1v96h-1zM785 178h1v96h-1zM789 178h1v96h-1zM791 178h1v96h-1zM793 178h1v96h-1zM795 178h1v96h-1zM805 178h1v96h-1zM813 178h1v96h-1zM819 178h1v96h-1zM827 178h1v96h-1zM833 178h1v96h-1zM847 178h1v96h-1zM849 178h1v96h-1zM853 178h1v96h-1zM863 178h1v96h-1zM865 178h1v96h-1zM867 178h1v96h-1zM873 178h1v96h-1zM879 178h1v96h-1zM887 178h1v96h-1zM889 178h1v96h-1zM915 178h1v96h-1zM919 178h1v96h-1zM925 178h1v96h-1zM931 178h1v96h-1zM937 178h1v96h-1zM947 178h1v96h-1zM951 178h1v96h-1zM953 178h1v96h-1zM965 178h1v96h-1zM969 178h1v96h-1zM971 178h1v96h-1zM979 178h1v96h-1zM981 178h1v96h-1z" fill="#787878"/>
<path d="M171 178h1v96h-1zM175 178h1v96h-1zM185 178h1v96h-1zM201 178h1v96h-1zM205 178h1v96h-1zM211 178h1v96h-1zM215 178h1v96h-1zM225 178h1v96h-1zM227 178h1v96h-1zM229 178h1v96h-1zM235 178h1v96h-1zM253 178h1v96h-1zM259 178h1v96h-1zM271 178h1v96h-1zM275 178h1v96h-1zM277 178h1v96h-1zM279 178h1v96h-1zM297 178h1v96h-1zM303 178h1v96h-1zM311 178h1v96h-1zM321 178h1v96h-1zM331 178h1v96h-1zM333 178h1v96h-1zM335 178h1v96h-1zM345 178h1v96h-1zM347 178h1v96h-1zM349 178h1v96h-1zM355 178h1v96h-1zM357 178h1v96h-1zM359 178h1v96h-1zM363 178h1v96h-1zM365 178h1v96h-1zM371 178h1v96h-1zM375 178h1v96h-1zM383 178h1v96h-1zM385 178h1v96h-1zM387 178h1v96h-1zM393 178h1v96h-1zM395 178h1v96h-1zM397 178h1v96h-1zM407 178h1v96h-1zM411 178h1v96h-1zM413 178h1v96h-1zM421 178h1v96h-1zM429 178h1v96h-1zM437 178h1v96h-1zM443 178h1v96h-1zM447 178h1v96h-1zM449 178h1v96h-1zM453 178h1v96h-1zM461 178h1v96h-1zM463 178h1v96h-1zM465 178h1v96h-1zM469 178h1v96h-1zM471 178h1v96h-1zM475 178h1v96h-1zM491 178h1v96h-1zM493 178h1v96h-1zM497 178h1v96h-1zM501 178h1v96h-1zM505 178h1v96h-1zM507 178h1v96h-1zM513 178h1v96h-1zM515 178h1v96h-1zM517 178h1v96h-1zM519 178h1v96h-1zM537 178h1v96h-1zM545 178h1v96h-1zM549 178h1v96h-1zM551 178h1v96h-1zM557 178h1v96h-1zM561 178h1v96h-1zM573 178h1v96h-1zM583 178h1v96h-1zM605 178h1v96h-1zM607 178h1v96h-1zM611 178h1v96h-1zM613 178h1v96h-1zM617 178h1v96h-1zM619 178h1v96h-1zM625 178h1v96h-1zM629 178h1v96h-1zM639 178h1v96h-1zM643 178h1v96h-1zM647 178h1v96h-1zM649 178h1v96h-1zM653 178h1v96h-1zM655 178h1v96h-1zM661 178h1v96h-1zM663 178h1v96h-1zM677 178h1v96h-1zM687 178h1v96h-1zM691 178h1v96h-1zM695 178h1v96h-1zM705 178h1v96h-1zM707 178h1v96h-1zM717 178h1v96h-1zM719 178h1v96h-1zM723 178h1v96h-1zM735 178h1v96h-1zM737 178h1v96h-1zM743 178h1v96h-1zM745 178h1v96h-1zM747 178h1v96h-1zM755 178h1v96h-1zM763 178h1v96h-1zM773 178h1v96h-1zM777 178h1v96h-1zM787 178h1v96h-1zM799 178h1v96h-1zM807 178h1v96h-1zM811 178h1v96h-1zM821 178h1v96h-1zM823 178h1v96h-1zM829 178h1v96h-1zM831 178h1v96h-1zM839 178h1v96h-1zM843 178h1v96h-1zM851 178h1v96h-1zM855 178h1v96h-1zM857 178h1v96h-1zM861 178h1v96h-1zM869 178h1v96h-1zM875 178h1v96h-1zM877 178h1v96h-1zM881 178h1v96h-1zM883 178h1v96h-1zM893 178h1v96h-1zM903 178h1v96h-1zM905 178h1v96h-1zM907 178h1v96h-1zM911 178h1v96h-1zM913 178h1v96h-1zM921 178h1v96h-1zM923 178h1v96h-1zM927 178h1v96h-1zM935 178h1v96h-1zM939 178h1v96h-1zM943 178h1v96h-1zM945 178h1v96h-1zM949 178h1v96h-1zM957 178h1v96h-1zM959 178h1v96h-1zM967 178h1v96h-1zM975 178h1v96h-1zM977 178h1v96h-1z" fill="#464646"/>
<path d="M231 178h3v96h-3zM376 178h3v96h-3zM523 178h3v96h-3zM667 178h3v96h-3zM815 178h3v96h-3zM961 178h3v96h-3z" fill="#080808"/>
<rect x="158" y="178" width="73" height="1" fill="#e8e8e8"/><rect x="158" y="273" width="73" height="1" fill="#d8d8d8"/>
<rect x="234" y="178" width="142" height="1" fill="#e8e8e8"/><rect x="234" y="273" width="142" height="1" fill="#d8d8d8"/>
<rect x="379" y="178" width="144" height="1" fill="#e8e8e8"/><rect x="379" y="273" width="144" height="1" fill="#d8d8d8"/>
<rect x="526" y="178" width="141" height="1" fill="#e8e8e8"/><rect x="526" y="273" width="141" height="1" fill="#d8d8d8"/>
<rect x="670" y="178" width="145" height="1" fill="#e8e8e8"/><rect x="670" y="273" width="145" height="1" fill="#d8d8d8"/>
<rect x="818" y="178" width="143" height="1" fill="#e8e8e8"/><rect x="818" y="273" width="143" height="1" fill="#d8d8d8"/>
<rect x="964" y="178" width="18" height="1" fill="#e8e8e8"/><rect x="964" y="273" width="18" height="1" fill="#d8d8d8"/>
</svg>
<svg class="a" style="left:136px;top:61px" width="846" height="666" viewBox="136 61 846 666">
<path d="M157 393.5 L164.5 393.5 L164.5 488.5 L176.5 488.5 L176.5 393.5 L237.5 393.5 L237.5 488.5 L312.5 488.5 L312.5 393.5 L320.5 393.5 L320.5 488.5 L384.5 488.5 L384.5 393.5 L455.5 393.5 L455.5 488.5 L467.5 488.5 L467.5 393.5 L528.5 393.5 L528.5 488.5 L602.5 488.5 L602.5 393.5 L611.5 393.5 L611.5 488.5 L675.5 488.5 L675.5 393.5 L747.5 393.5 L747.5 488.5 L758.5 488.5 L758.5 393.5 L819.5 393.5 L819.5 488.5 L894.5 488.5 L894.5 393.5 L902.5 393.5 L902.5 488.5 L968.5 488.5 L968.5 393.5 L982 393.5" stroke="#e2d0c6" stroke-width="1.3" fill="none"/>
<path d="M254.5 488.5V496.5M326.5 488.5V496.5M545.5 488.5V496.5M617.5 488.5V496.5M836.5 488.5V496.5M909.5 488.5V496.5M182.5 393.5V401.5M400.5 393.5V401.5M472.5 393.5V401.5M691.5 393.5V401.5M763.5 393.5V401.5" stroke="#c8b4aa" stroke-width="1" fill="none"/>
<rect x="154" y="61" width="3" height="648" fill="#66683e"/>
<rect x="154" y="178" width="3" height="96" fill="#cfd0b0"/>
<rect x="150.5" y="709.5" width="9" height="8.5" fill="#000" stroke="#8e8c66" stroke-width="1"/>
<path d="M152.3 717L154.9 711L157.5 717M153.3 715H156.5" stroke="#8a8860" stroke-width="1.3" fill="none"/>
<rect x="151.5" y="718.5" width="9" height="8.5" fill="#6c6a3a" stroke="#8e8c5e" stroke-width="1"/>
<path d="M154 720.5H157Q158.6 720.5 158.6 722Q158.6 723 157 723H154ZM154 723H157.3Q159 723 159 724.5Q159 726 157.3 726H154Z" fill="#1c1c0c"/><path d="M155 721.5H156.8M155 724.2H157" stroke="#6c6a3a" stroke-width="0.9"/>
<path d="M142.2 271.3H144.9V281H142.4V274.6L140 275.9V273.4Z" fill="#fff"/>
<path d="M146.8 275.2H148.4V272.8L152.2 276.2L148.4 279.6V277.2H146.8Z" fill="#fff"/>
<text x="138.5" y="496" font-size="12" font-weight="bold" fill="#f0d8c0" font-family="Liberation Sans">2</text>
<path d="M146.8 491H148.4V488.6L152.2 492L148.4 495.4V493H146.8Z" fill="#f0d8c0"/>
</svg><div id="vs" class="a">
  <div class="a" style="left:5px;top:7px;width:0;height:0;border-bottom:4px solid #4a4a4a;border-left:3.5px solid transparent;border-right:3.5px solid transparent"></div>
  <div class="a" style="left:1px;top:334px;width:14px;height:16px;border:1px solid #b0b0b0;border-radius:2px;background:linear-gradient(90deg,#f8f8f8,#e4e4e4)"></div>
  <div class="a" style="left:5px;top:339px;width:6px;height:1px;background:#666;box-shadow:0 2px 0 #666,0 4px 0 #666"></div>
  <div class="a" style="left:5px;top:655px;width:0;height:0;border-top:4px solid #4a4a4a;border-left:3.5px solid transparent;border-right:3.5px solid transparent"></div>
</div>
<div id="hs" class="a">
  <div class="a" style="left:5px;top:5px;width:0;height:0;border-right:4px solid #4a4a4a;border-top:3.5px solid transparent;border-bottom:3.5px solid transparent"></div>
  <div class="a" style="left:136px;top:1px;width:193px;height:15px;border:1px solid #a4a4a4;border-radius:2px;background:linear-gradient(#f6f6f6,#e8e8e8 50%,#d6d6d6)"></div>
  <div class="a" style="left:229px;top:5px;width:1px;height:6px;background:#555;box-shadow:2px 0 0 #555,4px 0 0 #555"></div>
  <div class="a" style="left:834px;top:5px;width:0;height:0;border-left:4px solid #4a4a4a;border-top:3.5px solid transparent;border-bottom:3.5px solid transparent"></div>
</div>
<div id="rb" class="a"></div>
<div id="status" class="a">
  <span style="left:2px">Готов...</span>
  <span style="left:747px;font-size:11.2px">Полное время файла: 000:00:01.800.055</span>
</div>
<div id="task" class="a">
  <div class="a" style="left:0;top:0;width:55px;height:7px;background:#8ca4c0"></div>
  <div class="a" style="left:13px;top:2px;width:26px;height:20px;border-radius:50%;border:1.5px solid #dfe8f4;background:#9ab2cc"></div>
  <div class="a tbtn" style="left:55px;width:51px;background:#d6e2ee"><div class="a" style="left:10px;top:2px;width:20px;height:6px;background:#e8d49a;border-left:2px solid #b8a870"></div></div>
  <div class="a" style="left:106px;top:0;width:1px;height:7px;background:#7a8aa0"></div>
  <div class="a" style="left:128px;top:1px;width:16px;height:16px;border-radius:50%;background:#d84030"></div>
  <div class="a tbtn" style="left:165px;width:53px;background:#dfe7f1"><div class="a" style="left:11px;top:2px;width:30px;height:8px;background:#fff;border:1px solid #7a8aa0"></div></div>
  <div class="a tbtn" style="left:220px;width:53px;background:#c6d6e8"><div class="a" style="left:10px;top:2px;width:31px;height:8px;background:#1a86cc;border-radius:2px"></div></div>
  <div class="a tbtn" style="left:274px;width:50px;background:#dfe7f0"><div class="a" style="left:9px;top:2px;width:29px;height:8px;background:#151515;border-radius:2px"></div></div>
  <div class="a tbtn" style="left:330px;width:52px;background:#d6e2ee"><div class="a" style="left:31px;top:2px;width:7px;height:7px;background:#e8b070;border-radius:50%"></div></div>
</div>
</body></html>
